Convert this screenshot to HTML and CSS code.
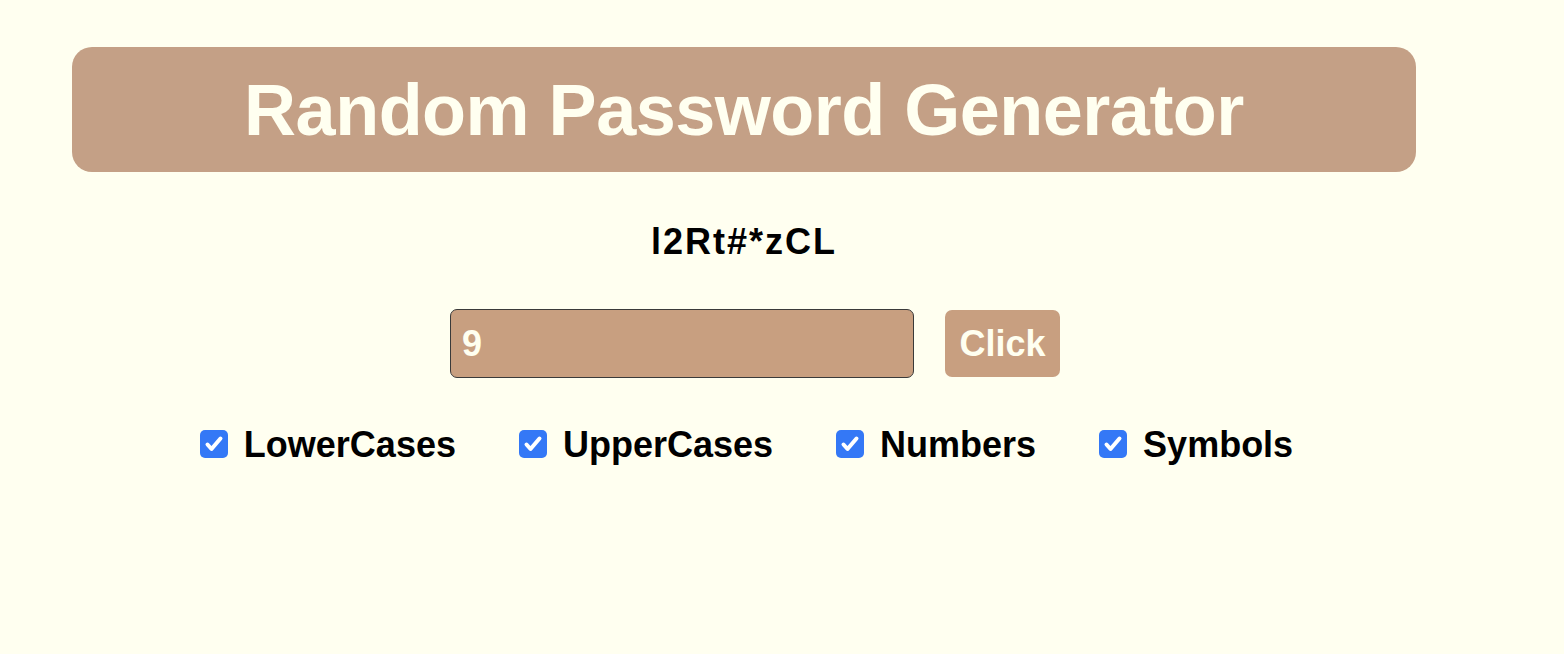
FILE: index.html
```html
<!DOCTYPE html>
<html lang="en">
<head>
<meta charset="utf-8">
<title>Random Password Generator</title>
<link rel="stylesheet" href="styles.css">
</head>
<body>
<main class="app">
  <header class="banner">
    <h1 class="title">Random Password Generator</h1>
  </header>
  <p class="password">l2Rt#*zCL</p>
  <div class="controls">
    <input class="length" type="text" value="9">
    <button class="generate" type="button">Click</button>
  </div>
  <div class="options">
    <label class="option">
      <span class="box"><svg viewBox="0 0 28 28" width="28" height="28"><path d="M7.5 14.5l4 4.5 9-10.5" fill="none" stroke="#fff" stroke-width="4" stroke-linecap="round" stroke-linejoin="round"/></svg></span>
      <span class="label">LowerCases</span>
    </label>
    <label class="option">
      <span class="box"><svg viewBox="0 0 28 28" width="28" height="28"><path d="M7.5 14.5l4 4.5 9-10.5" fill="none" stroke="#fff" stroke-width="4" stroke-linecap="round" stroke-linejoin="round"/></svg></span>
      <span class="label">UpperCases</span>
    </label>
    <label class="option">
      <span class="box"><svg viewBox="0 0 28 28" width="28" height="28"><path d="M7.5 14.5l4 4.5 9-10.5" fill="none" stroke="#fff" stroke-width="4" stroke-linecap="round" stroke-linejoin="round"/></svg></span>
      <span class="label">Numbers</span>
    </label>
    <label class="option">
      <span class="box"><svg viewBox="0 0 28 28" width="28" height="28"><path d="M7.5 14.5l4 4.5 9-10.5" fill="none" stroke="#fff" stroke-width="4" stroke-linecap="round" stroke-linejoin="round"/></svg></span>
      <span class="label">Symbols</span>
    </label>
  </div>
</main>
</body>
</html>
```

FILE: styles.css
```css
html, body {
  margin: 0;
  padding: 0;
  background: #fffff0;
}

body {
  min-height: 100vh;
  font-family: "Liberation Sans", Arial, sans-serif;
  font-weight: bold;
  color: #000;
}

.app {
  width: 1344px;
  margin: 0 0 0 72px;
  padding: 47px 0 120px;
  display: flex;
  flex-direction: column;
  align-items: center;
}

.banner {
  width: 100%;
  height: 125px;
  background: #c4a086;
  border-radius: 20px;
  display: flex;
  align-items: center;
  justify-content: center;
}

.title {
  margin: 0;
  font-size: 72px;
  font-weight: bold;
  letter-spacing: -0.5px;
  color: #fffff0;
  line-height: 1;
}

.password {
  margin: 49px 0 0;
  font-size: 36px;
  letter-spacing: 2px;
  line-height: 41px;
}

.controls {
  margin-top: 47px;
  display: flex;
  align-items: center;
  gap: 31px;
  padding-left: 22px;
}

.length {
  box-sizing: border-box;
  width: 464px;
  height: 69px;
  border: 1px solid #3a3a3a;
  border-radius: 7px;
  background: #c89f80;
  color: #fffff0;
  font-family: "Liberation Sans", Arial, sans-serif;
  font-weight: bold;
  font-size: 36px;
  padding: 0 11px;
  outline: none;
}

.generate {
  box-sizing: border-box;
  width: 115px;
  height: 67px;
  border: none;
  border-radius: 7px;
  background: #c89f80;
  color: #fffff0;
  font-family: "Liberation Sans", Arial, sans-serif;
  font-weight: bold;
  font-size: 36px;
  padding: 0;
}

.options {
  margin-top: 52px;
  height: 28px;
  display: flex;
  align-items: center;
  gap: 63px;
  padding-left: 5px;
}

.option {
  display: flex;
  align-items: center;
  gap: 16px;
}

.box {
  flex: none;
  width: 28px;
  height: 28px;
  border-radius: 5px;
  background: #3478f6;
  display: flex;
}

.label {
  font-size: 36px;
  line-height: 41px;
}
```
